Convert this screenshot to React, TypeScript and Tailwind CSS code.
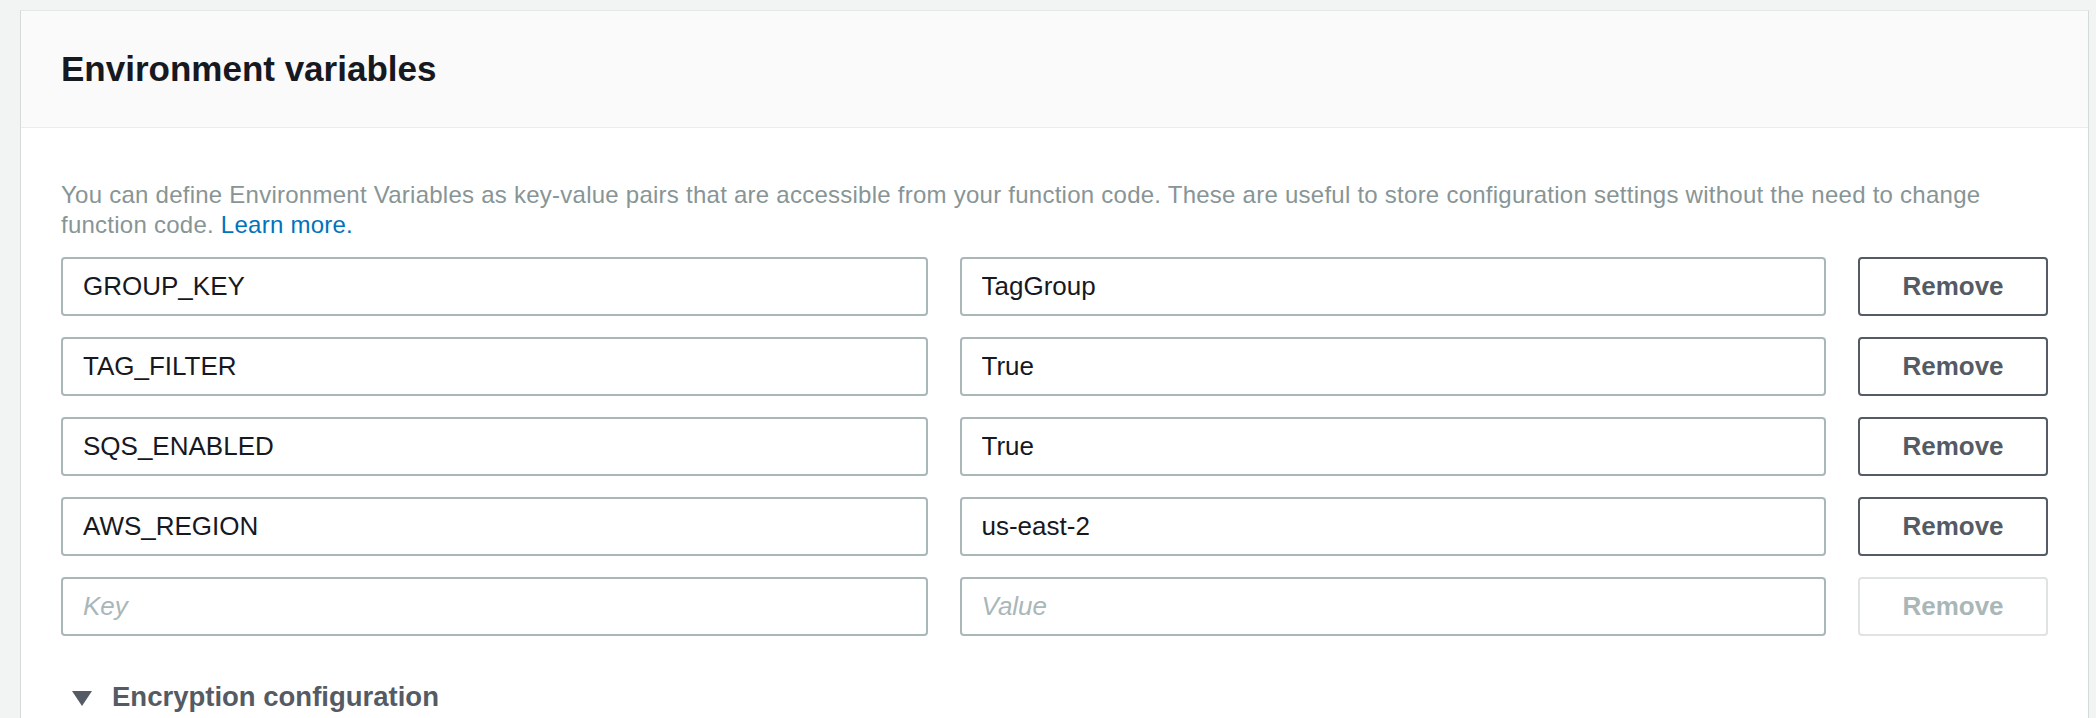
import React from "react";

interface EnvVar {
  key: string;
  value: string;
}

const vars: EnvVar[] = [
  { key: "GROUP_KEY", value: "TagGroup" },
  { key: "TAG_FILTER", value: "True" },
  { key: "SQS_ENABLED", value: "True" },
  { key: "AWS_REGION", value: "us-east-2" },
];

const inputClass =
  "h-[59px] w-full rounded-[4px] border-2 border-[#aab7b8] bg-white px-[20px] text-[26px] text-[#16191f] outline-none placeholder:italic placeholder:text-[#aab7b8]";

function RemoveButton({ disabled }: { disabled?: boolean }) {
  return (
    <button
      disabled={disabled}
      className={
        disabled
          ? "h-[59px] w-full rounded-[4px] border-2 border-[#dfe3e3] bg-white text-[26px] font-bold text-[#aab7b8]"
          : "h-[59px] w-full rounded-[4px] border-2 border-[#545b64] bg-white text-[26px] font-bold text-[#545b64]"
      }
    >
      Remove
    </button>
  );
}

export default function App() {
  return (
    <div className="h-[718px] overflow-hidden bg-[#f2f3f3] pl-[20px] pr-[7px] pt-[10px] font-['Liberation_Sans',Arial,sans-serif]">
      <div className="border border-[#e3e7e7] border-l-[#d5dbdb] border-r-[#d5dbdb] bg-white">
        <div className="border-b border-[#eaeded] bg-[#fafafa] px-[40px] py-[36px]">
          <h2 className="text-[35px] leading-[44px] font-bold text-[#16191f]">Environment variables</h2>
        </div>

        <div className="px-[40px] pt-[52px] pb-[120px]">
          <p className="text-[24px] leading-[30px] tracking-[0.25px] text-[#879596]">
            You can define Environment Variables as key-value pairs that are accessible from your function code. These are
            useful to store configuration settings without the need to change function code.{" "}
            <a href="#" className="text-[#0073bb]">
              Learn more.
            </a>
          </p>

          <div className="mt-[17px] grid grid-cols-[1fr_1fr_190px] gap-x-[32px] gap-y-[21px]">
            {vars.map((v) => (
              <React.Fragment key={v.key}>
                <input className={inputClass} defaultValue={v.key} />
                <input className={inputClass} defaultValue={v.value} />
                <RemoveButton />
              </React.Fragment>
            ))}
            <input className={inputClass} placeholder="Key" />
            <input className={inputClass} placeholder="Value" />
            <RemoveButton disabled />
          </div>

          <div className="mt-[45px] flex items-center gap-[20px] pl-[11px]">
            <svg width="20" height="15" viewBox="0 0 20 15" className="mt-[2px]">
              <polygon points="0,0 20,0 10,15" fill="#545b64" />
            </svg>
            <span className="text-[27.5px] leading-[32px] font-bold text-[#545b64]">Encryption configuration</span>
          </div>
        </div>
      </div>
    </div>
  );
}
